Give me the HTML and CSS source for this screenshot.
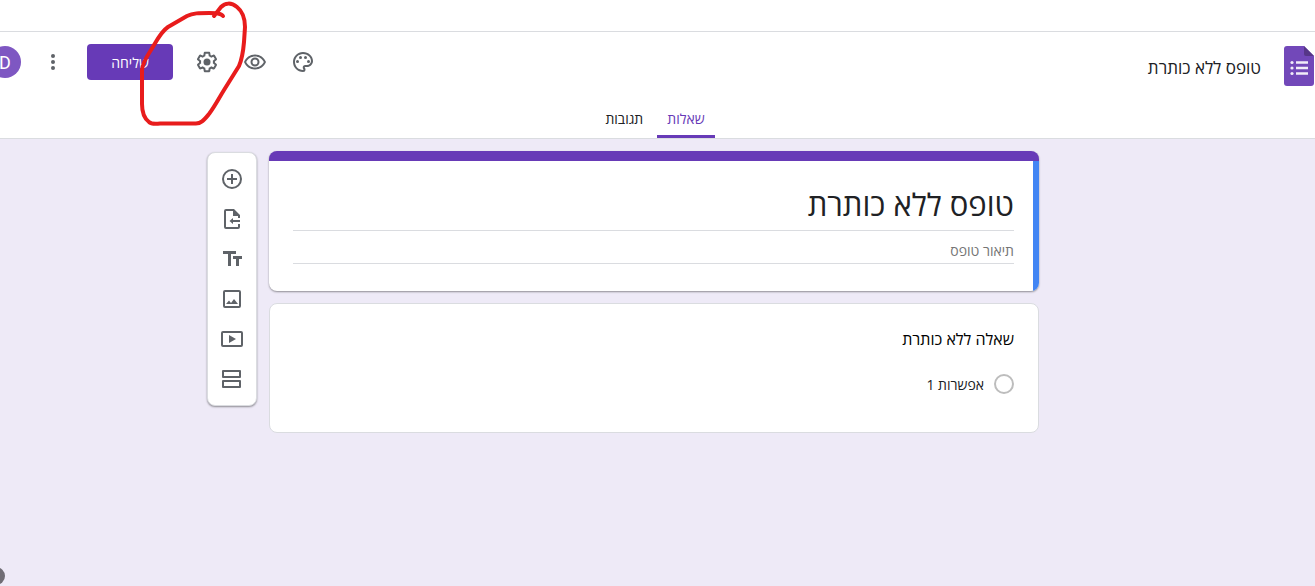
FILE: index.html
```html
<!DOCTYPE html>
<html lang="he" dir="rtl">
<head>
<meta charset="utf-8">
<meta name="viewport" content="width=device-width, initial-scale=1">
<title>טופס ללא כותרת</title>
<link rel="stylesheet" href="styles.css">
</head>
<body>
<div class="top-strip"></div>
<header class="header">
  <div class="header-row">
    <a class="logo" href="#" aria-label="טפסים">
      <svg width="30" height="40" viewBox="0 0 30 40" aria-hidden="true">
        <path fill="#7248b9" d="M3 0H20L30 10V37a3 3 0 0 1-3 3H3a3 3 0 0 1-3-3V3a3 3 0 0 1 3-3z"/>
        <path fill="#563688" d="M20 0L30 10H22a2 2 0 0 1-2-2z"/>
        <g fill="#f1ecf8"><circle cx="8" cy="16.500" r="1.600"/><circle cx="8" cy="22" r="1.600"/><circle cx="8" cy="27.500" r="1.600"/>
        <path d="M12 15.300h12v2.400H12zM12 20.800h12v2.400H12zM12 26.300h12v2.400H12z"/></g>
      </svg>
    </a>
    <input class="doc-name" type="text" aria-label="שם המסמך" value="טופס ללא כותרת">
    <div class="actions">
      <button class="icon-button" type="button" aria-label="התאמה אישית של העיצוב">
        <svg class="icon" viewBox="0 0 24 24"><path d="M12 22C6.490 22 2 17.510 2 12S6.490 2 12 2s10 4.040 10 9c0 3.310-2.690 6-6 6h-1.770c-.28 0-.5.22-.5.5 0 .12.05.23.13.33.41.47.64 1.060.64 1.670A2.500 2.500 0 0 1 12 22zm0-18c-4.410 0-8 3.590-8 8s3.590 8 8 8c.28 0 .5-.22.5-.5a.54.54 0 0 0-.14-.35c-.41-.46-.63-1.050-.63-1.650a2.500 2.500 0 0 1 2.500-2.500H16c2.210 0 4-1.790 4-4 0-3.860-3.590-7-8-7z"/><circle cx="6.500" cy="11.500" r="1.500"/><circle cx="9.500" cy="7.500" r="1.500"/><circle cx="14.500" cy="7.500" r="1.500"/><circle cx="17.500" cy="11.500" r="1.500"/></svg>
      </button>
      <button class="icon-button" type="button" aria-label="תצוגה מקדימה">
        <svg class="icon" viewBox="0 0 24 24"><path d="M12 6.500c3.790 0 7.170 2.130 8.820 5.500-1.650 3.370-5.020 5.500-8.820 5.500S4.830 15.370 3.180 12C4.830 8.630 8.210 6.500 12 6.500m0-2C7 4.500 2.730 7.610 1 12c1.730 4.390 6 7.500 11 7.500s9.270-3.110 11-7.500c-1.730-4.390-6-7.500-11-7.500z"/><path d="M12 9.500a2.500 2.500 0 0 1 0 5 2.500 2.500 0 0 1 0-5m0-2a4.500 4.500 0 1 0 0 9 4.500 4.500 0 0 0 0-9z"/></svg>
      </button>
      <button class="icon-button" type="button" aria-label="הגדרות">
        <svg class="icon" viewBox="0 0 24 24"><path d="M13.850 22.250h-3.700c-.74 0-1.360-.54-1.450-1.270l-.27-1.890c-.27-.14-.53-.29-.79-.46l-1.800.72c-.7.26-1.470-.03-1.810-.65L2.200 15.530c-.35-.66-.2-1.440.36-1.880l1.530-1.190c-.01-.15-.02-.3-.02-.46 0-.15.01-.31.02-.46l-1.520-1.190c-.59-.45-.74-1.260-.37-1.880l1.850-3.190c.34-.62 1.110-.9 1.790-.63l1.810.73c.26-.17.52-.32.78-.46l.27-1.910c.09-.7.71-1.250 1.440-1.250h3.700c.74 0 1.360.54 1.450 1.270l.27 1.890c.27.14.53.29.79.46l1.800-.72c.71-.26 1.480.03 1.820.65l1.840 3.180c.36.66.2 1.440-.36 1.880l-1.520 1.190c.01.15.02.3.02.46s-.01.31-.02.46l1.520 1.190c.56.45.72 1.230.37 1.860l-1.860 3.220c-.34.62-1.110.9-1.800.63l-1.800-.72c-.26.17-.52.32-.78.46l-.27 1.910c-.1.680-.72 1.220-1.460 1.220zm-3.230-2h2.760l.37-2.550.53-.22c.44-.18.88-.44 1.340-.78l.45-.34 2.380.96 1.380-2.400-2.030-1.580.07-.56c.03-.26.06-.51.06-.78s-.03-.53-.06-.78l-.07-.56 2.030-1.580-1.390-2.400-2.390.96-.45-.35c-.42-.32-.87-.58-1.330-.77l-.52-.22-.37-2.550h-2.760l-.37 2.550-.53.21c-.44.19-.88.44-1.340.79l-.45.33-2.380-.95-1.390 2.390 2.030 1.580-.07.56a7 7 0 0 0-.06.79c0 .26.02.53.06.78l.07.56-2.030 1.580 1.380 2.400 2.390-.96.45.35c.43.33.86.58 1.330.77l.53.22z"/><circle cx="12" cy="12" r="3.500"/></svg>
      </button>
      <button class="send" type="button">שליחה</button>
      <button class="icon-button" type="button" aria-label="עוד">
        <svg class="icon" viewBox="0 0 24 24"><circle cx="12" cy="6" r="2"/><circle cx="12" cy="12" r="2"/><circle cx="12" cy="18" r="2"/></svg>
      </button>
      <button class="avatar" type="button">D</button>
    </div>
  </div>
  <nav class="tabs">
    <a class="tab tab-active" href="#questions" aria-current="page">שאלות</a>
    <a class="tab" href="#responses">תגובות</a>
  </nav>
</header>

<main class="workspace">
  <div class="form-column">
    <section class="card title-card">
      <div class="title-body">
        <input class="form-title" type="text" aria-label="כותרת הטופס" value="טופס ללא כותרת">
        <input class="form-description" type="text" aria-label="תיאור טופס" placeholder="תיאור טופס">
      </div>
    </section>
    <section class="card question-card">
      <h2 class="question">שאלה ללא כותרת</h2>
      <label class="option"><input class="radio" type="radio" name="q1">אפשרות 1</label>
    </section>
  </div>
  <div class="toolbar" role="toolbar" aria-label="הוספה">
    <button class="tool" type="button" aria-label="הוספת שאלה"><svg class="icon" viewBox="0 0 24 24"><path d="M13 7h-2v4H7v2h4v4h2v-4h4v-2h-4zM12 2a10 10 0 1 0 0 20 10 10 0 0 0 0-20zm0 18a8 8 0 1 1 0-16 8 8 0 0 1 0 16z"/></svg></button>
    <button class="tool" type="button" aria-label="ייבוא שאלות"><svg class="icon" viewBox="0 0 24 24"><path d="M14 2H6a2 2 0 0 0-2 2v16a2 2 0 0 0 2 2h12a2 2 0 0 0 2-2v-3h-2v3H6V4h7v5h5v2h2V8zM20 13h-7v-2L9.500 14l3.500 3v-2h7z"/></svg></button>
    <button class="tool" type="button" aria-label="הוספת כותרת ותיאור"><svg class="icon" viewBox="0 0 24 24"><path d="M3 4h13v3h-5v12H8V7H3zM13 9h9v3h-3v7h-3v-7h-3z"/></svg></button>
    <button class="tool" type="button" aria-label="הוספת תמונה"><svg class="icon" viewBox="0 0 24 24"><path d="M19 5v14H5V5h14m0-2H5a2 2 0 0 0-2 2v14a2 2 0 0 0 2 2h14a2 2 0 0 0 2-2V5a2 2 0 0 0-2-2z"/><path d="M14 12l-3 3.900L9 13.500 6 17h12z"/></svg></button>
    <button class="tool" type="button" aria-label="הוספת סרטון"><svg class="icon" viewBox="0 0 24 24"><path d="M9 8v8l7-4z"/><path d="M21 4H3a2 2 0 0 0-2 2v12a2 2 0 0 0 2 2h18a2 2 0 0 0 2-2V6a2 2 0 0 0-2-2zm0 14H3V6h18z"/></svg></button>
    <button class="tool" type="button" aria-label="הוספת קטע"><svg class="icon" viewBox="0 0 24 24"><path d="M19 5v4H4V5h15m1-2H3a1 1 0 0 0-1 1v6a1 1 0 0 0 1 1h17a1 1 0 0 0 1-1V4a1 1 0 0 0-1-1zM19 15v4H4v-4h15m1-2H3a1 1 0 0 0-1 1v6a1 1 0 0 0 1 1h17a1 1 0 0 0 1-1v-6a1 1 0 0 0-1-1z"/></svg></button>
  </div>
</main>

<button class="help" type="button" aria-label="עזרה"></button>

<svg class="marker" width="260" height="140" viewBox="0 0 260 140" aria-hidden="true">
  <path d="M223 16C221 13 216 13 209 13C199 13 193 13 187 16L168 27C162 31 158 38 154 45C149 54 143 60 142 70V104C142 114 145 119 149 122C151 124 155 124 160 123.500H195C201 124 204 120 209 114C215 106 219 98 224 90L239 66C242 59 243 54 244 42L245 27C245 18 242 11 237 7C231 2 225 3 221 7L214 16"/>
</svg>
</body>
</html>
```
FILE: styles.css
```css
* {
  box-sizing: border-box;
}

body {
  position: relative;
  display: flex;
  flex-direction: column;
  min-height: 100vh;
  margin: 0;
  overflow: hidden;
  background: #eeeaf7;
  color: #202124;
  font-family: "Open Sans", "DejaVu Sans", sans-serif;
  font-size: 14px;
}

button,
input {
  margin: 0;
  padding: 0;
  border: 0;
  background: none;
  color: inherit;
  font: inherit;
}

.top-strip {
  height: 32px;
  background: #fff;
  border-bottom: 1px solid #dadce0;
}

.header {
  background: #fff;
  border-bottom: 1px solid #dadce0;
}

.header-row {
  display: flex;
  align-items: flex-start;
  height: 68px;
  padding-top: 6px;
  padding-right: 1px;
}

.logo {
  display: flex;
  margin-top: 8px;
}

.doc-name {
  flex: 1;
  min-width: 0;
  height: 32px;
  margin-top: 13px;
  margin-right: 23px;
  font-size: 17px;
}

.actions {
  display: flex;
  align-items: center;
}

.icon-button {
  display: flex;
  align-items: center;
  justify-content: center;
  width: 48px;
  height: 48px;
}

.icon {
  width: 24px;
  height: 24px;
  fill: #5f6368;
}

.send {
  width: 86px;
  height: 36px;
  margin: 0 10px;
  border-radius: 4px;
  background: #673ab7;
  color: #fff;
  font-weight: 500;
}

.avatar {
  width: 32px;
  height: 32px;
  margin-right: 8px;
  margin-left: -11px;
  border-radius: 50%;
  background: #7e57c2;
  color: #fff;
  font-family: Roboto, sans-serif;
  font-size: 18px;
}

.tabs {
  display: flex;
  justify-content: center;
  gap: 4px;
  height: 38px;
  padding-right: 5px;
}

.tab {
  padding: 8px 10px 0;
  border-bottom: 3px solid transparent;
  border-radius: 2px 2px 0 0;
  color: #202124;
  line-height: 22px;
  text-decoration: none;
}

.tab-active {
  border-bottom-color: #673ab7;
  color: #673ab7;
}

.workspace {
  display: grid;
  grid-template-columns: 1fr minmax(0, 770px) 1fr;
  align-items: start;
  column-gap: 12px;
  padding: 12px 7px 12px 0;
}

.form-column {
  display: flex;
  flex-direction: column;
  grid-column: 2;
  gap: 12px;
}

.card {
  overflow: hidden;
  border-radius: 8px;
  background: #fff;
}

.title-card {
  border-top: 10px solid #673ab7;
  box-shadow: 0 1px 2px rgba(0, 0, 0, 0.4);
}

.title-body {
  display: flex;
  flex-direction: column;
  padding: 20px 19px 27px 24px;
  border-right: 6px solid #4285f4;
}

.form-title {
  height: 50px;
  padding-bottom: 4px;
  border-bottom: 1px solid #dadce0;
  font-size: 31px;
}

.form-description {
  height: 33px;
  padding-top: 6px;
  border-bottom: 1px solid #dadce0;
}

.form-description::placeholder {
  color: #757575;
  opacity: 1;
}

.question-card {
  padding: 23px 24px 36px;
  border: 1px solid #dadce0;
}

.question {
  margin: 0 0 21px;
  color: #000;
  font-size: 16px;
  font-weight: 400;
  line-height: 24px;
}

.option {
  display: flex;
  align-items: center;
  gap: 10px;
  height: 24px;
}

.radio {
  width: 20px;
  height: 20px;
  border: 2px solid #bdbdbd;
  border-radius: 50%;
  appearance: none;
}

.toolbar {
  display: flex;
  flex-direction: column;
  justify-self: start;
  width: 50px;
  margin-top: 1px;
  padding: 6px 1px;
  border: 1px solid #dadce0;
  border-radius: 8px;
  background: #fff;
  box-shadow: 0 1px 2px rgba(0, 0, 0, 0.4);
}

.tool {
  display: flex;
  align-items: center;
  justify-content: center;
  height: 40px;
}

.help {
  position: absolute;
  bottom: 1px;
  left: -13px;
  width: 18px;
  height: 18px;
  border-radius: 50%;
  background: #706d75;
}

.marker {
  position: absolute;
  top: 0;
  left: 0;
  fill: none;
  stroke: #e81c1c;
  stroke-width: 4;
  stroke-linecap: round;
  stroke-linejoin: round;
  pointer-events: none;
}
```
